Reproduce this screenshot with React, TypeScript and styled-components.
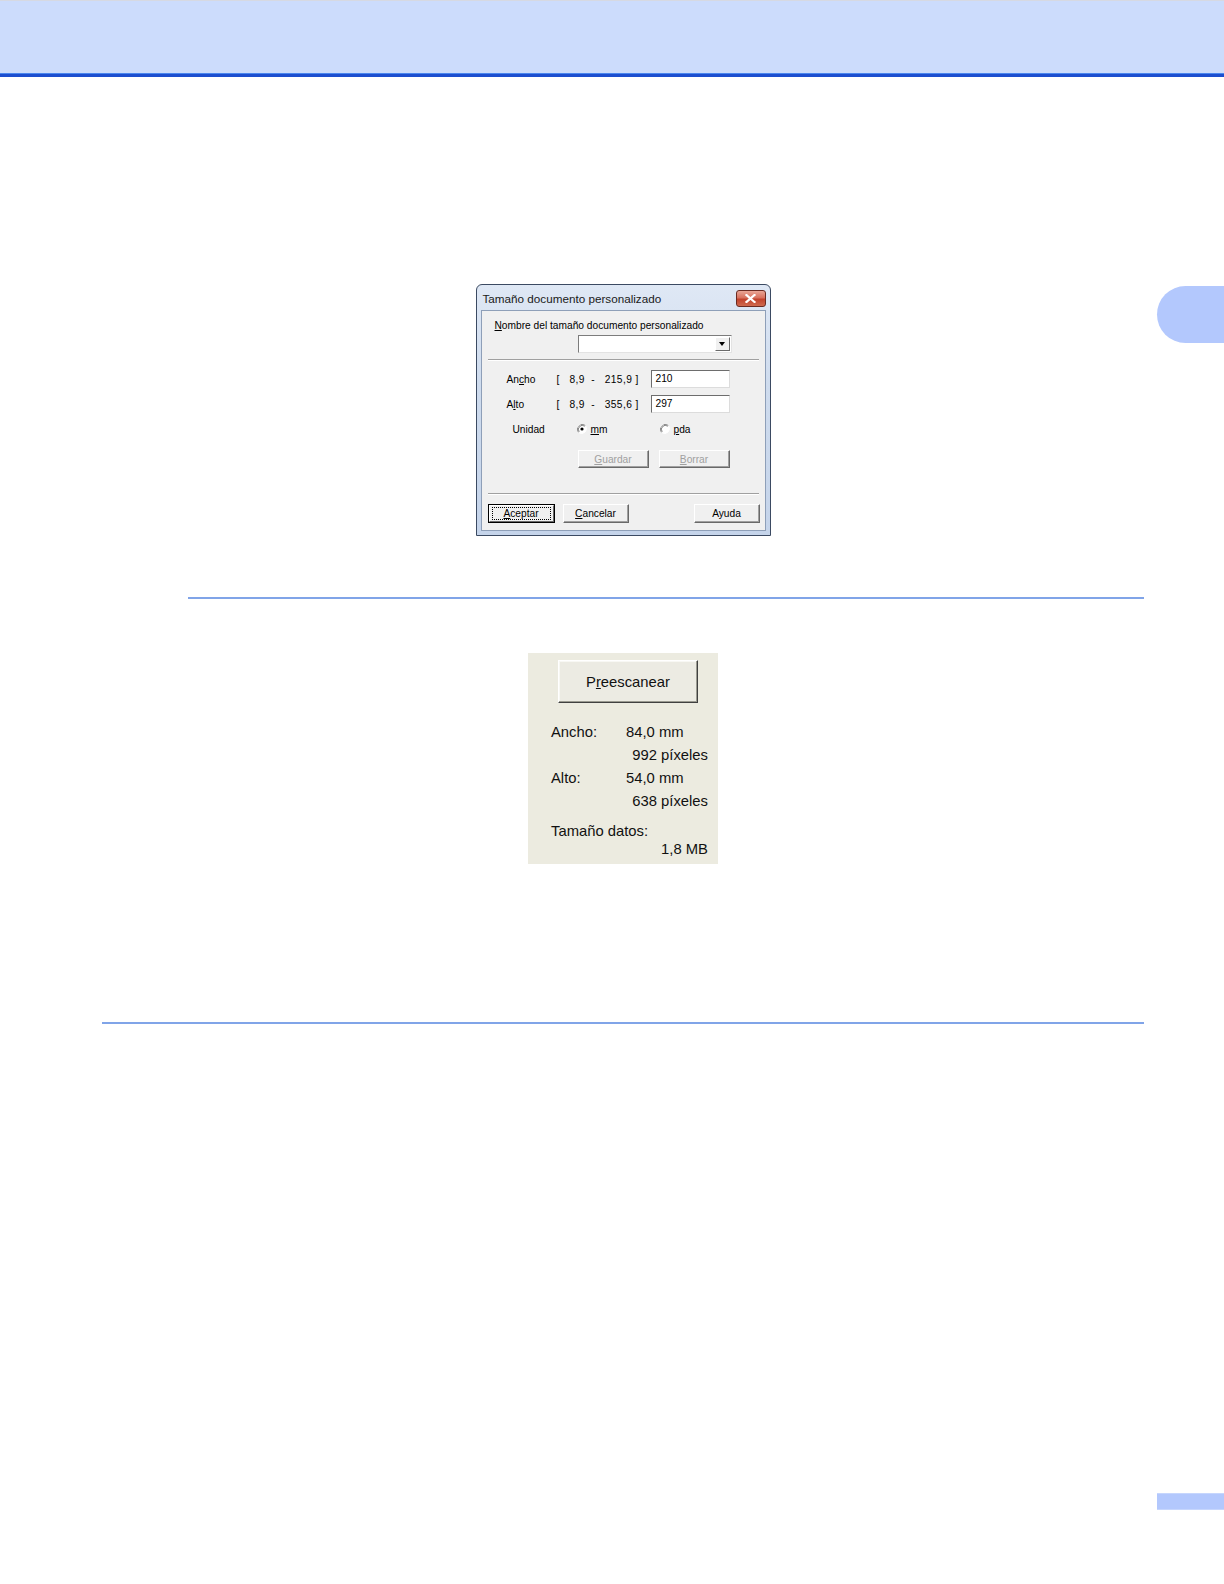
import styled, { createGlobalStyle } from "styled-components";

const GlobalStyle = createGlobalStyle`
  html, body {
    margin: 0;
    padding: 0;
    background: #fff;
  }
  body {
    font-family: "Liberation Sans", Arial, sans-serif;
    color: #000;
  }
`;

const Page = styled.div`
  width: 1224px;
  height: 1584px;
  display: flex;
  flex-direction: column;
  background: #fff;
  overflow: hidden;
`;

const Header = styled.header`
  height: 74px;
  background: #ccdcfc;
  border-bottom: 3px solid #1c4ecf;
  box-shadow: inset 0 -1px 0 #4a86ee, inset 0 1px 0 #d6d9e2;
  flex-shrink: 0;
`;

const Main = styled.div`
  display: flex;
`;

const Content = styled.main`
  margin-left: 102px;
  width: 1042px;
  display: flex;
  flex-direction: column;
`;

const Aside = styled.aside`
  margin-left: 13px;
  flex: 1;
`;

const ChapterTab = styled.div`
  margin-top: 209px;
  height: 57px;
  background: #b3c8fd;
  border-radius: 29px 0 0 29px;
`;

const Rule = styled.hr<{ $indent?: number; $top: number }>`
  margin: ${({ $top }) => $top}px 0 0 ${({ $indent }) => $indent ?? 0}px;
  border: 0;
  height: 2px;
  background: #80a4e8;
`;

const Footer = styled.footer`
  margin-top: auto;
  margin-bottom: 74px;
  padding-left: 1157px;
`;

const PageTab = styled.div`
  height: 17px;
  background: #b3c8fd;
  box-shadow: inset 0 1px 0 #c6d6fd, inset 0 -1px 0 #c6d6fd;
`;

/* ---------- dialog ---------- */

const DialogWrap = styled.div`
  margin-top: 207px;
  display: flex;
  justify-content: center;
`;

const Dialog = styled.div`
  width: 295px;
  height: 252px;
  box-sizing: border-box;
  border: 1px solid #3b4a62;
  border-radius: 6px 6px 0 0;
  background: linear-gradient(180deg, #dfe8f5 0%, #cfdcee 40%, #c5d4ea 100%);
  padding: 0 4px 4px;
  display: flex;
  flex-direction: column;
`;

const TitleBar = styled.div`
  height: 25px;
  display: flex;
  align-items: center;
  justify-content: space-between;
  padding: 1px 0 0 2px;
  box-sizing: border-box;
`;

const Title = styled.span`
  font-size: 11.7px;
  color: #1a1a1a;
`;

const CloseButton = styled.div`
  width: 30px;
  height: 17px;
  box-sizing: border-box;
  border: 1px solid #6b2b22;
  border-radius: 3px;
  background: linear-gradient(180deg, #e9a696 0%, #d8725f 45%, #c2432d 55%, #cf6a4f 100%);
  display: flex;
  align-items: center;
  justify-content: center;
`;

const Body = styled.div`
  flex: 1;
  background: #f0f0f0;
  border: 1px solid #8e9fb8;
  padding: 8px 5px 0 0;
  font-size: 10.2px;
  display: flex;
  flex-direction: column;
`;

const NameLabel = styled.div`
  padding-left: 13px;
  line-height: 13px;
  height: 13px;
`;

const Combo = styled.div`
  margin: 3px 0 0 96px;
  width: 154px;
  height: 18px;
  box-sizing: border-box;
  background: #fff;
  border: 1px solid;
  border-color: #7c7c7c #e3e3e3 #e3e3e3 #7c7c7c;
  display: flex;
  justify-content: flex-end;
  padding: 1px;
`;

const ComboArrow = styled.div`
  width: 15px;
  box-sizing: border-box;
  background: #f0f0f0;
  border: 1px solid;
  border-color: #fff #6a6a6a #6a6a6a #fff;
  display: flex;
  align-items: center;
  justify-content: center;

  &::after {
    content: "";
    border-left: 3.5px solid transparent;
    border-right: 3.5px solid transparent;
    border-top: 4px solid #000;
  }
`;

const Separator = styled.div<{ $top: number }>`
  margin: ${({ $top }) => $top}px 1px 0 6px;
  height: 1px;
  background: #a0a0a0;
  border-bottom: 1px solid #fff;
`;

const FieldRow = styled.div<{ $top: number }>`
  margin-top: ${({ $top }) => $top}px;
  padding-left: 25px;
  height: 18px;
  display: flex;
  align-items: center;
`;

const FieldLabel = styled.span<{ $width: number }>`
  width: ${({ $width }) => $width}px;
  flex-shrink: 0;
`;

const Range = styled.span`
  width: 94px;
  white-space: pre;
  letter-spacing: 0.4px;
  flex-shrink: 0;
`;

const TextInput = styled.div`
  width: 79px;
  height: 18px;
  box-sizing: border-box;
  background: #fff;
  border: 1px solid;
  border-color: #6d6d6d #dcdcdc #dcdcdc #6d6d6d;
  padding: 0 4px;
  line-height: 15px;
`;

const UnitRow = styled.div`
  margin-top: 9px;
  padding-left: 31px;
  height: 14px;
  display: flex;
  align-items: center;
`;

const RadioOption = styled.label<{ $width?: number }>`
  width: ${({ $width }) => ($width ? `${$width}px` : "auto")};
  display: flex;
  align-items: center;
  gap: 4px;
`;

const ButtonRow = styled.div<{ $top: number; $left: number }>`
  margin-top: ${({ $top }) => $top}px;
  padding-left: ${({ $left }) => $left}px;
  display: flex;
  gap: 10px;
`;

const WinButton = styled.div<{ $width: number; $height: number; $disabled?: boolean; $push?: boolean }>`
  width: ${({ $width }) => $width}px;
  height: ${({ $height }) => $height}px;
  box-sizing: border-box;
  background: #f0f0f0;
  border: 1px solid;
  border-color: #fff #696969 #696969 #fff;
  box-shadow: inset -1px -1px 0 #a0a0a0;
  display: flex;
  align-items: center;
  justify-content: center;
  color: ${({ $disabled }) => ($disabled ? "#a0a0a0" : "#000")};
  margin-left: ${({ $push }) => ($push ? "auto" : "0")};
`;

const DefaultButton = styled.div`
  width: 67px;
  height: 19px;
  box-sizing: border-box;
  border: 1px solid #000;
  display: flex;
`;

const DefaultInner = styled.div`
  flex: 1;
  background: #f0f0f0;
  border: 1px solid;
  border-color: #fff #696969 #696969 #fff;
  display: flex;
  align-items: center;
  justify-content: center;
  padding: 1px 2px;
`;

const FocusRect = styled.div`
  flex: 1;
  align-self: stretch;
  border: 1px dotted #000;
  display: flex;
  align-items: center;
  justify-content: center;
`;

const FooterButtons = styled.div`
  margin-top: 9px;
  padding-left: 6px;
  display: flex;
  gap: 8px;
`;

/* ---------- scan panel ---------- */

const PanelWrap = styled.div`
  margin-top: 54px;
  display: flex;
  justify-content: center;
`;

const Panel = styled.div`
  width: 190px;
  height: 211px;
  box-sizing: border-box;
  background: #ecebe0;
  padding: 7px 10px 0 23px;
  font-size: 14.8px;
  color: #111;
`;

const ScanButton = styled.div`
  margin-left: 7px;
  width: 140px;
  height: 43px;
  box-sizing: border-box;
  background: #ecebe3;
  border: 1px solid;
  border-color: #fff #404040 #404040 #fff;
  box-shadow: inset -1px -1px 0 #9a9a90, inset 1px 1px 0 #f8f8f4;
  display: flex;
  align-items: center;
  justify-content: center;
`;

const Stats = styled.div`
  margin-top: 18px;
  line-height: 23px;
`;

const StatRow = styled.div`
  display: flex;
`;

const StatLabel = styled.span`
  width: 75px;
  flex-shrink: 0;
`;

const StatRight = styled.div`
  text-align: right;
`;

const DataSize = styled.div`
  margin-top: 9px;
  line-height: 18px;
`;

const Radio = ({ checked }: { checked?: boolean }) => (
  <svg width="10" height="10" viewBox="0 0 10 10">
    <path d="M8.5 1.5 A5 5 0 0 0 1.5 8.5" fill="none" stroke="#808080" strokeWidth="1" />
    <path d="M1.5 8.5 A5 5 0 0 0 8.5 1.5" fill="none" stroke="#ffffff" strokeWidth="1" />
    <circle cx="5" cy="5" r="4" fill="#fff" />
    <path d="M7.8 2.2 A4 4 0 0 0 2.2 7.8" fill="none" stroke="#808080" strokeWidth="1" />
    {checked && <circle cx="5" cy="5" r="1.6" fill="#000" />}
  </svg>
);

const CloseIcon = () => (
  <svg width="11" height="9" viewBox="0 0 11 9">
    <path d="M1.5 1 L9.5 8 M9.5 1 L1.5 8" stroke="#fff" strokeWidth="2.2" strokeLinecap="square" />
  </svg>
);

export default function App() {
  return (
    <Page>
      <GlobalStyle />
      <Header />
      <Main>
        <Content>
          <DialogWrap>
            <Dialog>
              <TitleBar>
                <Title>Tamaño documento personalizado</Title>
                <CloseButton>
                  <CloseIcon />
                </CloseButton>
              </TitleBar>
              <Body>
                <NameLabel>
                  <u>N</u>ombre del tamaño documento personalizado
                </NameLabel>
                <Combo>
                  <ComboArrow />
                </Combo>
                <Separator $top={6} />
                <FieldRow $top={9}>
                  <FieldLabel $width={50}>
                    An<u>c</u>ho
                  </FieldLabel>
                  <Range>{"[   8,9  -   215,9 ]"}</Range>
                  <TextInput>210</TextInput>
                </FieldRow>
                <FieldRow $top={7}>
                  <FieldLabel $width={50}>
                    A<u>l</u>to
                  </FieldLabel>
                  <Range>{"[   8,9  -   355,6 ]"}</Range>
                  <TextInput>297</TextInput>
                </FieldRow>
                <UnitRow>
                  <FieldLabel $width={64}>Unidad</FieldLabel>
                  <RadioOption $width={83}>
                    <Radio checked />
                    <span>
                      <u>m</u>m
                    </span>
                  </RadioOption>
                  <RadioOption>
                    <Radio />
                    <span>
                      <u>p</u>da
                    </span>
                  </RadioOption>
                </UnitRow>
                <ButtonRow $top={14} $left={96}>
                  <WinButton $width={71} $height={18} $disabled>
                    <span>
                      <u>G</u>uardar
                    </span>
                  </WinButton>
                  <WinButton $width={71} $height={18} $disabled>
                    <span>
                      <u>B</u>orrar
                    </span>
                  </WinButton>
                </ButtonRow>
                <Separator $top={25} />
                <FooterButtons>
                  <DefaultButton>
                    <DefaultInner>
                      <FocusRect>
                        <span>
                          <u>A</u>ceptar
                        </span>
                      </FocusRect>
                    </DefaultInner>
                  </DefaultButton>
                  <WinButton $width={66} $height={19}>
                    <span>
                      <u>C</u>ancelar
                    </span>
                  </WinButton>
                  <WinButton $width={66} $height={19} $push>
                    Ayuda
                  </WinButton>
                </FooterButtons>
              </Body>
            </Dialog>
          </DialogWrap>

          <Rule $indent={86} $top={61} />

          <PanelWrap>
            <Panel>
              <ScanButton>
                <span>
                  P<u>r</u>eescanear
                </span>
              </ScanButton>
              <Stats>
                <StatRow>
                  <StatLabel>Ancho:</StatLabel>
                  <span>84,0 mm</span>
                </StatRow>
                <StatRight>992 píxeles</StatRight>
                <StatRow>
                  <StatLabel>Alto:</StatLabel>
                  <span>54,0 mm</span>
                </StatRow>
                <StatRight>638 píxeles</StatRight>
              </Stats>
              <DataSize>
                <div>Tamaño datos:</div>
                <StatRight>1,8 MB</StatRight>
              </DataSize>
            </Panel>
          </PanelWrap>

          <Rule $top={158} />
        </Content>
        <Aside>
          <ChapterTab />
        </Aside>
      </Main>
      <Footer>
        <PageTab />
      </Footer>
    </Page>
  );
}
